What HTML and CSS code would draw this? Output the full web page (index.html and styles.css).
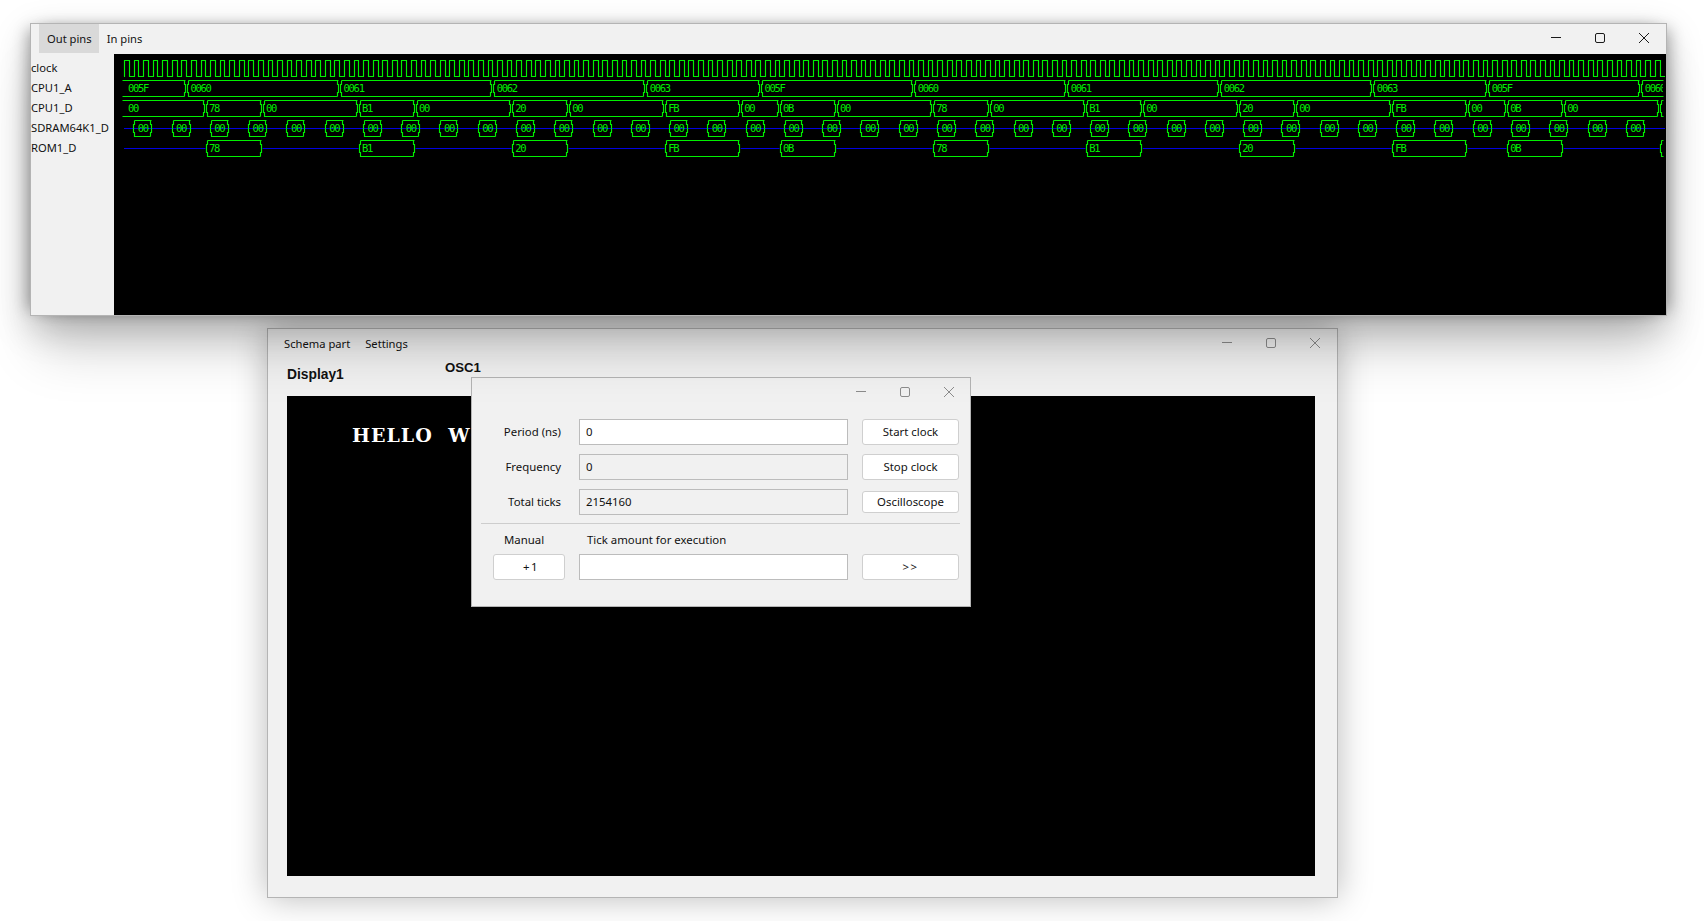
FILE: index.html
```html
<!DOCTYPE html>
<html lang="en">
<head>
    <meta charset="UTF-8">
    <meta name="viewport" content="width=device-width, initial-scale=1.0">
    <title>Oscilloscope</title>

    <link rel="stylesheet" href="styles.css">

    <script>
        var CYCLE = 38.27;
        var TOP = 54;   // svg starts at this page y
        var LEFT = 114; // and this page x

        function px(v) {
            return Math.round(v) + 0.5;
        }

        // one bus box with the small 1px steps on both sides
        function box(x0, x1, top, openLeft, openRight) {
            var a = px(x0), b = px(x1), t = top + 0.5, e = top + 16.5;
            var d = "";
            if (openLeft) {
                d += "M" + a + " " + t + "L" + b + " " + t;
            } else {
                d += "M" + (a + 1) + " " + t + "L" + b + " " + t;
            }
            if (openRight) {
                d += "M" + b + " " + t + "M" + b + " " + e;
            } else {
                d += "M" + (b - 1) + " " + t + "V" + (t + 4) + "H" + b + "V" + (e - 4) + "H" + (b - 1) + "V" + e;
            }
            d += "M" + (openRight ? b : b - 1) + " " + e + "H" + (openLeft ? a : a + 1);
            if (!openLeft) {
                d += "V" + (e - 4) + "H" + a + "V" + (t + 4) + "H" + (a + 1) + "V" + t;
            }
            return "<path d='" + d + "'></path>";
        }

        function label(x, top, text) {
            return "<text x='" + x + "' y='" + (top + 12) + "'>" + text + "</text>";
        }

        function drawScope() {
            var svg = document.getElementById("scope");
            var green = "", blue = "", texts = "";
            var i, x;

            // clock
            var d = "M124 76.5";
            for (i = 0; i <= 160; i++) {
                x = 124 + i * CYCLE / 4;
                d += "H" + px(x) + "V60.5H" + px(x + CYCLE / 8) + "V76.5";
            }
            d += "H1665";
            green += "<path d='" + d + "'></path>";

            // address bus
            var addr = [["0060", 4], ["0061", 4], ["0062", 4], ["0063", 3], ["005F", 4], ["0060", 4], ["0061", 4], ["0062", 4], ["0063", 3], ["005F", 4], ["0060", 4]];
            var at = 186;
            green += box(122, at - 1, 80, true, false);
            texts += label(128, 80, "005F");
            for (i = 0; i < addr.length; i++) {
                var next = at + addr[i][1] * CYCLE;
                var last = next > 1663;
                green += box(at + 1, last ? 1663 : next - 1, 80, false, last);
                texts += label(at + 4.5, 80, addr[i][0]);
                at = next;
            }

            // data bus and rom: value comes 18.5px after the address, 00 in between
            var rom = [["78", 57], ["B1", 57], ["20", 57], ["FB", 76], ["0B", 57], ["78", 57], ["B1", 57], ["20", 57], ["FB", 76], ["0B", 57], ["78", 57]];
            var lens = [4, 4, 4, 3, 4, 4, 4, 4, 3, 4];
            var start = 186;
            var prev = 122;
            var first = true;
            blue += "<path d='M124 128.5H1665'></path>";
            var romLine = 124;
            for (i = 0; i < rom.length; i++) {
                var v0 = start + 18.5;
                var v1 = v0 + rom[i][1];
                green += box(prev + (first ? 0 : 1), v0 - 1, 100, first, false);
                texts += label(first ? 128 : prev + 4.5, 100, "00");
                first = false;

                var cut = v1 > 1663;
                green += box(v0 + 1, cut ? 1663 : v1 - 1, 100, false, cut);
                texts += label(v0 + 4.5, 100, rom[i][0]);
                green += box(v0 + 1, cut ? 1663 : v1 - 1, 140, false, cut);
                texts += label(v0 + 4.5, 140, rom[i][0]);

                blue += "<path d='M" + romLine + " 148.5H" + px(v0) + "'></path>";
                romLine = v1 + 1;
                prev = v1;
                start += (lens[i] || 4) * CYCLE;
            }

            // sdram, a short 00 every cycle
            for (i = 0; i < 40; i++) {
                x = 133.3 + i * CYCLE;
                green += box(x, x + 18, 120, false, false);
                texts += label(x + 4.5, 120, "00");
            }

            svg.innerHTML = "<g transform='translate(" + (-LEFT) + " " + (-TOP) + ")'>" +
                "<g class='blue'>" + blue + "</g>" +
                "<g class='green'>" + green + "</g>" +
                "<g class='hex' clip-path='url(#edge)'>" + texts + "</g></g>" +
                "<clipPath id='edge'><rect x='114' y='54' width='1549' height='261'></rect></clipPath>";
        }

        window.onload = function () {
            drawScope();
        }
    </script>
</head>
<body>

    <div class="window scope-window">
        <div class="titlebar">
            <div class="menu">
                <span class="tab active">Out pins</span>
                <span class="tab">In pins</span>
            </div>
            <div class="controls dark">
                <svg viewBox="0 0 10 10"><path d="M0 4.5H10"></path></svg>
                <svg viewBox="0 0 10 10"><rect x="0.5" y="0.5" width="9" height="9" rx="1.5"></rect></svg>
                <svg viewBox="0 0 10 10"><path d="M0 0L10 10M10 0L0 10"></path></svg>
            </div>
        </div>
        <div class="scope-body">
            <div class="pins">
                <div>clock</div>
                <div>CPU1_A</div>
                <div>CPU1_D</div>
                <div>SDRAM64K1_D</div>
                <div>ROM1_D</div>
            </div>
            <svg id="scope" class="scope" width="1552" height="261"></svg>
        </div>
    </div>

    <div class="window schema-window">
        <div class="titlebar">
            <div class="menu">
                <span class="tab">Schema part</span>
                <span class="tab">Settings</span>
            </div>
            <div class="controls">
                <svg viewBox="0 0 10 10"><path d="M0 4.5H10"></path></svg>
                <svg viewBox="0 0 10 10"><rect x="0.5" y="0.5" width="9" height="9" rx="1.5"></rect></svg>
                <svg viewBox="0 0 10 10"><path d="M0 0L10 10M10 0L0 10"></path></svg>
            </div>
        </div>
        <div class="parts">
            <div class="part-name display-name">Display1</div>
            <div class="part-name osc-name">OSC1</div>
        </div>
        <div class="screen">HELLO WORLD</div>
    </div>

    <div class="window osc-window">
        <div class="titlebar small">
            <div class="controls">
                <svg viewBox="0 0 10 10"><path d="M0 4.5H10"></path></svg>
                <svg viewBox="0 0 10 10"><rect x="0.5" y="0.5" width="9" height="9" rx="1.5"></rect></svg>
                <svg viewBox="0 0 10 10"><path d="M0 0L10 10M10 0L0 10"></path></svg>
            </div>
        </div>
        <form class="form" action="#">
            <label>Period (ns)</label>
            <input type="text" value="0">
            <button type="button">Start clock</button>

            <label>Frequency</label>
            <input type="text" value="0" readonly>
            <button type="button">Stop clock</button>

            <label>Total ticks</label>
            <input type="text" value="2154160" readonly>
            <button type="button" class="short">Oscilloscope</button>
        </form>
        <div class="sep"></div>
        <form class="form lower" action="#">
            <label>Manual</label>
            <label>Tick amount for execution</label>
            <span></span>

            <button type="button" class="plus">+1</button>
            <input type="text">
            <button type="button" class="wide">&gt;&gt;</button>
        </form>
    </div>

</body>
</html>
```

FILE: styles.css
```css
body {
    margin: 0;
    width: 1704px;
    height: 921px;
    overflow: hidden;
    background-color: #fff;
    color: #111;
    font-family: "Noto Sans", "Open Sans", sans-serif;
    font-size: 11.2px;
}

.window {
    position: absolute;
    box-sizing: border-box;
    border: 1px solid #b4b4b4;
    background-color: #f1f1f1;
}

.scope-window {
    left: 30px;
    top: 23px;
    width: 1637px;
    height: 293px;
    z-index: 3;
    box-shadow: 0 12px 34px rgba(0, 0, 0, .22),
        0 44px 50px -10px rgba(0, 0, 0, .17),
        -8px 0 14px -6px rgba(0, 0, 0, .3),
        8px 0 14px -6px rgba(0, 0, 0, .3);
}

.schema-window {
    left: 267px;
    top: 328px;
    width: 1071px;
    height: 570px;
    z-index: 1;
    box-shadow: 0 0 32px rgba(0, 0, 0, .28);
}

.osc-window {
    left: 471px;
    top: 377px;
    width: 500px;
    height: 230px;
    z-index: 2;
}

.titlebar {
    display: flex;
    justify-content: space-between;
    height: 30px;
}

.titlebar.small {
    height: 41px;
    justify-content: flex-end;
}

.menu {
    display: flex;
    padding-left: 8px;
}

.tab {
    display: flex;
    align-items: center;
    height: 29px;
    padding: 0 7px 1px 8px;
    box-sizing: border-box;
}

.tab.active {
    background-color: #d9d9d9;
}

.schema-window .titlebar {
    height: 32px;
}

.schema-window .menu {
    padding-left: 8px;
}

.schema-window .tab {
    height: 30px;
}

.controls {
    display: flex;
    gap: 34px;
    padding: 5px 17px 0 0;
    height: 10px;
    margin-top: 4px;
}

.osc-window .controls {
    padding-right: 16px;
}

.controls svg {
    width: 10px;
    height: 10px;
    overflow: visible;
}

.controls path,
.controls rect {
    fill: none;
    stroke: #8c8c8c;
    stroke-width: 1;
}

.controls.dark path,
.controls.dark rect {
    stroke: #1a1a1a;
}

.scope-body {
    display: flex;
}

.pins {
    width: 83px;
    padding-top: 4px;
    box-sizing: border-box;
    white-space: nowrap;
}

.pins div {
    height: 20px;
    line-height: 20px;
}

.scope {
    display: block;
    background-color: #000;
}

.green path {
    fill: none;
    stroke: #00f000;
    stroke-width: 1.15;
}

.blue path {
    fill: none;
    stroke: #0000e0;
    stroke-width: 1.15;
}

.hex text {
    fill: #00f000;
    font-family: "DejaVu Sans Mono", monospace;
    font-size: 10.5px;
    letter-spacing: -1.3px;
}

.parts {
    display: flex;
    height: 35px;
    padding-left: 19px;
}

.part-name {
    font-family: "Liberation Sans", Arial, sans-serif;
    font-weight: bold;
    line-height: 16px;
    color: #111;
}

.display-name {
    width: 158px;
    margin-top: 6px;
    font-size: 13.8px;
}

.osc-name {
    margin-top: -1px;
    font-size: 13.2px;
}

.screen {
    box-sizing: border-box;
    width: 1028px;
    height: 480px;
    margin-left: 19px;
    padding: 28px 0 0 65px;
    background-color: #000;
    color: #fff;
    font-family: "DejaVu Serif", serif;
    font-size: 19px;
    font-weight: bold;
    letter-spacing: 1px;
    word-spacing: 8px;
}

.form {
    display: grid;
    grid-template-columns: 72px 269px 97px;
    grid-auto-rows: 26px;
    column-gap: 14px;
    row-gap: 9px;
    padding-left: 21px;
    font-size: 11.4px;
}

.form label {
    display: flex;
    align-items: center;
    justify-content: flex-end;
    padding: 0 4px 1px 0;
}

.form input {
    box-sizing: border-box;
    width: 100%;
    height: 26px;
    padding: 0 6px 1px;
    border: 1px solid #bcbcbc;
    background-color: #fff;
    color: #111;
    font: inherit;
    outline: none;
}

.form input[readonly] {
    background-color: #f1f1f1;
}

.form button {
    box-sizing: border-box;
    height: 26px;
    padding: 0 0 1px;
    border: 1px solid #cfcfcf;
    border-radius: 3px;
    background-color: #fff;
    color: #111;
    font: inherit;
}

.form button.short {
    height: 22px;
    align-self: center;
}

.form button.wide {
    letter-spacing: 1.5px;
}

.form button.plus {
    letter-spacing: 1.5px;
    padding-left: 4px;
}

.sep {
    height: 1px;
    margin: 8px 10px 6px 9px;
    background-color: #cdcdcd;
}

.form.lower {
    grid-template-rows: 20px 26px;
    row-gap: 4px;
}

.form.lower label {
    justify-content: flex-start;
    padding: 0 0 1px 8px;
}

.form.lower label:first-child {
    padding-left: 11px;
}
```
